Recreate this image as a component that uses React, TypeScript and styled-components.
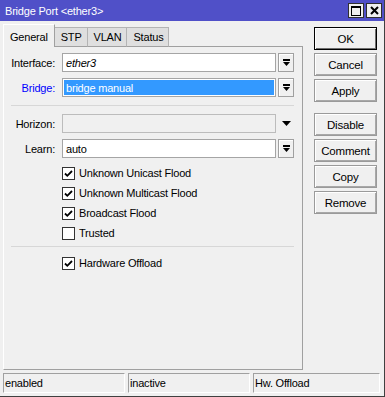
import styled, { createGlobalStyle } from "styled-components";

const GlobalStyle = createGlobalStyle`
    html, body {
        margin: 0;
        padding: 0;
        background: #f0f0f0;
    }
    * {
        box-sizing: border-box;
    }
`

function DropIcon() {
    return (
        <svg width="9" height="8" viewBox="0 0 9 8">
            <rect x="1" y="0" width="7" height="2" fill="#000"/>
            <polygon points="1,3 8,3 4.5,7" fill="#000"/>
        </svg>
    )
}

function CheckMark() {
    return (
        <svg width="11" height="11" viewBox="0 0 11 11">
            <path d="M2 5.5 L4.3 7.8 L9 3" stroke="#000" strokeWidth="1.8" fill="none"/>
        </svg>
    )
}

type FieldProps = {
    label: string;
    value?: string;
    highlight?: boolean;
    italic?: boolean;
    disabled?: boolean;
    blue?: boolean;
}

function Field({label, value, highlight, italic, disabled, blue}: FieldProps) {
    return (
        <FieldRow>
            <Label $blue={blue}>{label}:</Label>
            <Input $disabled={disabled}>
                {value && <Value $highlight={highlight} $italic={italic}>{value}</Value>}
            </Input>
            {disabled ? (
                <ArrowSlot>
                    <svg width="9" height="5" viewBox="0 0 9 5">
                        <polygon points="0,0 9,0 4.5,5" fill="#000"/>
                    </svg>
                </ArrowSlot>
            ) : (
                <DropButton><DropIcon/></DropButton>
            )}
        </FieldRow>
    )
}

function Check({label, checked}: { label: string, checked?: boolean }) {
    return (
        <CheckRow>
            <CheckBox>{checked && <CheckMark/>}</CheckBox>
            <span>{label}</span>
        </CheckRow>
    )
}

function App() {
    return (
        <>
            <GlobalStyle/>
            <Window>
                <TitleBar>
                    <Title>Bridge Port &lt;ether3&gt;</Title>
                    <TitleButtons>
                        <TitleButton>
                            <svg width="10" height="10" viewBox="0 0 10 10">
                                <rect x="0.5" y="0.5" width="9" height="9" stroke="#000" fill="none"/>
                                <rect x="0" y="0" width="10" height="2" fill="#000"/>
                            </svg>
                        </TitleButton>
                        <TitleButton>
                            <svg width="9" height="9" viewBox="0 0 9 9">
                                <path d="M1 1 L8 8 M8 1 L1 8" stroke="#000" strokeWidth="2"/>
                            </svg>
                        </TitleButton>
                    </TitleButtons>
                </TitleBar>
                <Body>
                    <Main>
                        <TabRow>
                            <Tab $active>General</Tab>
                            <Tab>STP</Tab>
                            <Tab>VLAN</Tab>
                            <Tab>Status</Tab>
                            <TabFill/>
                        </TabRow>
                        <Panel>
                            <Field label="Interface" value="ether3" italic/>
                            <Field label="Bridge" value="bridge manual" highlight blue/>
                            <Separator/>
                            <Field label="Horizon" disabled/>
                            <Field label="Learn" value="auto"/>
                            <Checks>
                                <Check label="Unknown Unicast Flood" checked/>
                                <Check label="Unknown Multicast Flood" checked/>
                                <Check label="Broadcast Flood" checked/>
                                <Check label="Trusted"/>
                            </Checks>
                            <Separator $tight/>
                            <Check label="Hardware Offload" checked/>
                        </Panel>
                    </Main>
                    <Sidebar>
                        <Button $default>OK</Button>
                        <Button>Cancel</Button>
                        <Button>Apply</Button>
                        <Button $spaced>Disable</Button>
                        <Button>Comment</Button>
                        <Button>Copy</Button>
                        <Button>Remove</Button>
                    </Sidebar>
                </Body>
                <StatusBar>
                    <StatusCell>enabled</StatusCell>
                    <StatusCell>inactive</StatusCell>
                    <StatusCell>Hw. Offload</StatusCell>
                </StatusBar>
            </Window>
        </>
    )
}

const Window = styled.div`
    width: 385px;
    height: 397px;
    display: flex;
    flex-direction: column;
    background: #f0f0f0;
    border-right: 1px solid #404040;
    border-bottom: 1px solid #404040;
    font-family: "Liberation Sans", Arial, sans-serif;
    font-size: 11px;
    letter-spacing: -0.2px;
    color: #000;
`

const TitleBar = styled.div`
    height: 21px;
    flex-shrink: 0;
    display: flex;
    align-items: center;
    justify-content: space-between;
    padding: 0 2px 0 5px;
    background: #5050c8;
`

const Title = styled.div`
    color: #fff;
    font-size: 11px;
`

const TitleButtons = styled.div`
    display: flex;
    gap: 2px;
`

const TitleButton = styled.div`
    width: 16px;
    height: 15px;
    display: flex;
    align-items: center;
    justify-content: center;
    background: #f0f0f0;
    border: 1px solid #303030;
`

const Body = styled.div`
    flex: 1;
    display: flex;
    padding: 3px 0 0 3px;
`

const Main = styled.div`
    width: 300px;
    display: flex;
    flex-direction: column;
`

const TabRow = styled.div`
    height: 23px;
    display: flex;
    align-items: flex-end;
`

const Tab = styled.div<{ $active?: boolean }>`
    height: ${p => p.$active ? "23px" : "20px"};
    padding: ${p => p.$active ? "2px 6px 0 6px" : "0 5px 0 6px"};
    display: flex;
    align-items: center;
    background: ${p => p.$active ? "#f0f0f0" : "#dfdfdf"};
    border: 1px solid ${p => p.$active ? "#a0a0a0" : "#b4b4b4"};
    border-left-color: ${p => p.$active ? "#fff" : "#b4b4b4"};
    border-top-color: ${p => p.$active ? "#fff" : "#b4b4b4"};
    border-bottom: ${p => p.$active ? "none" : "1px solid #a0a0a0"};
    margin-left: ${p => p.$active ? "0" : "-1px"};
    position: relative;
    z-index: ${p => p.$active ? 1 : 0};
`

const TabFill = styled.div`
    flex: 1;
    border-bottom: 1px solid #a0a0a0;
`

const Panel = styled.div`
    flex: 1;
    display: flex;
    flex-direction: column;
    padding-top: 6px;
    border: 1px solid #a0a0a0;
    border-top: none;
    border-left-color: #fff;
`

const FieldRow = styled.div`
    height: 19px;
    display: flex;
    align-items: stretch;
    padding-right: 8px;
    margin-bottom: 6px;
`

const Label = styled.div<{ $blue?: boolean }>`
    width: 51px;
    margin-right: 7px;
    text-align: right;
    align-self: center;
    color: ${p => p.$blue ? "#0000ff" : "#000"};
    white-space: nowrap;
`

const Input = styled.div<{ $disabled?: boolean }>`
    flex: 1;
    display: flex;
    padding: 1px;
    background: ${p => p.$disabled ? "#f0f0f0" : "#fff"};
    border: 1px solid ${p => p.$disabled ? "#bcbcbc" : "#a5a5a5"};
`

const Value = styled.div<{ $highlight?: boolean, $italic?: boolean }>`
    flex: 1;
    display: flex;
    align-items: center;
    padding-left: 2px;
    font-style: ${p => p.$italic ? "italic" : "normal"};
    background: ${p => p.$highlight ? "#3399ff" : "transparent"};
    color: ${p => p.$highlight ? "#fff" : "#000"};
`

const DropButton = styled.div`
    width: 16px;
    margin-left: 2px;
    display: flex;
    align-items: center;
    justify-content: center;
    background: #f0f0f0;
    border: 1px solid #a0a0a0;
    box-shadow: inset 1px 1px 0 #fff;
`

const ArrowSlot = styled.div`
    width: 16px;
    margin-left: 2px;
    display: flex;
    align-items: center;
    justify-content: center;
`

const Separator = styled.div<{ $tight?: boolean }>`
    height: 1px;
    background: #d7d7d7;
    margin: ${p => p.$tight ? "3px 8px 6px 7px" : "2px 8px 8px 7px"};
`

const Checks = styled.div`
    display: flex;
    flex-direction: column;
    margin-top: -1px;
`

const CheckRow = styled.div`
    height: 20px;
    display: flex;
    align-items: center;
    gap: 4px;
    padding-left: 58px;
`

const CheckBox = styled.div`
    width: 13px;
    height: 13px;
    display: flex;
    align-items: center;
    justify-content: center;
    background: #fff;
    border: 1px solid #333;
`

const Sidebar = styled.div`
    width: 63px;
    margin-left: 11px;
    padding-top: 3px;
    display: flex;
    flex-direction: column;
    gap: 3px;
`

const Button = styled.div<{ $default?: boolean, $spaced?: boolean }>`
    height: 23px;
    display: flex;
    align-items: center;
    justify-content: center;
    font-size: 11.5px;
    background: #f0f0f0;
    border: 1px solid ${p => p.$default ? "#000" : "#9a9a9a"};
    box-shadow: ${p => p.$default
        ? "inset 1px 1px 0 #fff, inset -1px -1px 0 #6e6e6e"
        : "inset 1px 1px 0 #fff, inset -1px -1px 0 #a8a8a8"};
    margin-top: ${p => p.$spaced ? "8px" : "0"};
`

const StatusBar = styled.div`
    display: grid;
    grid-template-columns: 122px 122px 1fr;
    gap: 3px;
    padding: 3px 4px 3px 3px;
`

const StatusCell = styled.div`
    height: 20px;
    display: flex;
    align-items: center;
    padding-left: 1px;
    border: 1px solid;
    border-color: #a0a0a0 #fff #fff #a0a0a0;
`

export default App
